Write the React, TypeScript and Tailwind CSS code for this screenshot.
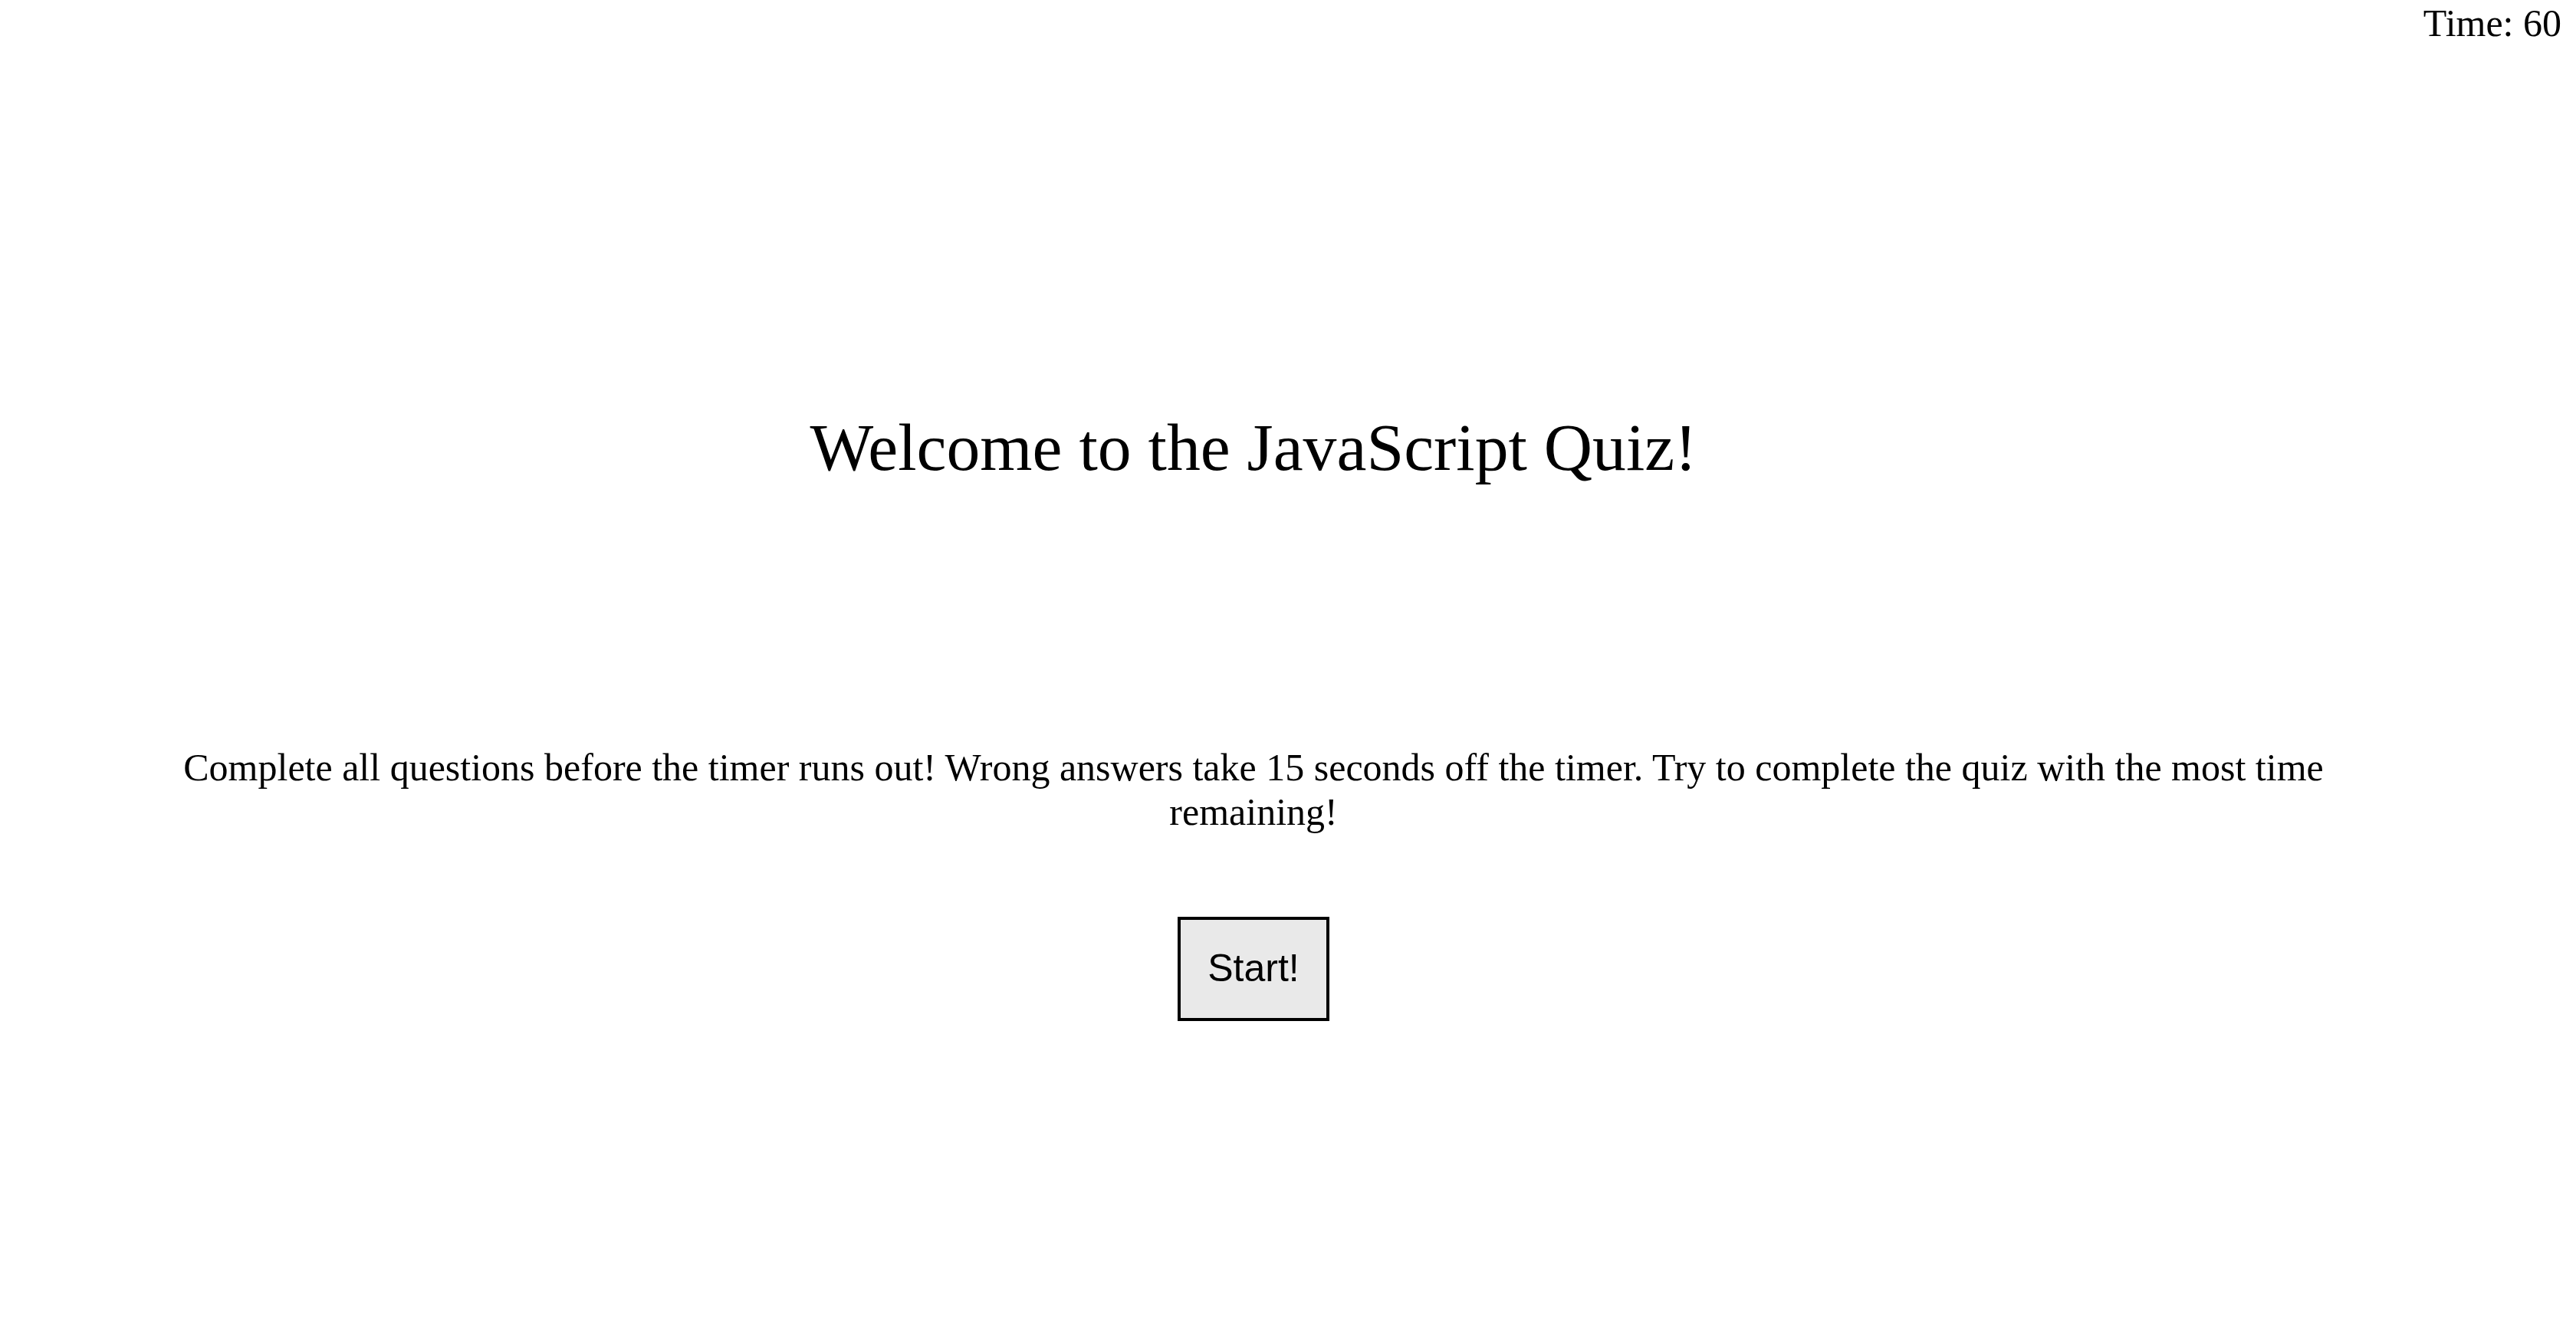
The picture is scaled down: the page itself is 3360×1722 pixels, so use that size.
export default function App() {
  return (
    <div className="min-h-[1722px] w-full bg-white text-black">
      <div className="flex justify-end pr-[19px] pt-[2px] font-['Liberation_Serif',serif] text-[50px] leading-[1.15]">
        <span>Time: 60</span>
      </div>
      <main className="flex w-[3270px] flex-col items-center font-['Liberation_Serif',serif]">
        <h1 className="mt-[474px] text-center text-[87.7px] font-normal leading-[1.15]">
          Welcome to the JavaScript Quiz!
        </h1>
        <p className="mt-[339px] w-[2900px] text-center text-[50px] leading-[1.15]">
          Complete all questions before the timer runs out! Wrong answers take 15 seconds off the timer. Try to complete the quiz with the most time remaining!
        </p>
        <button className="mt-[108px] border-[4px] border-black bg-[#e9e9e9] px-[35px] py-[35px] font-['Liberation_Sans',Arial,sans-serif] text-[50px] leading-[1.15] text-black">
          Start!
        </button>
      </main>
    </div>
  );
}
